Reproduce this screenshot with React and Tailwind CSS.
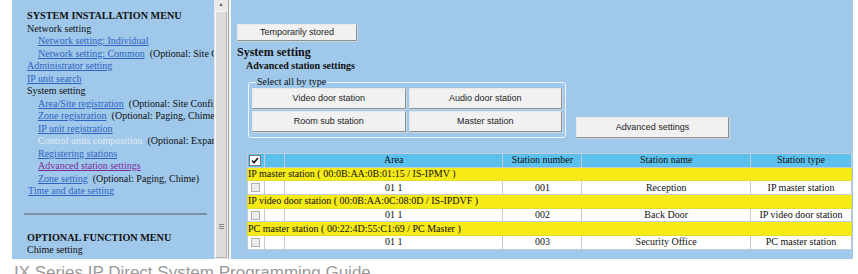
const serif = "font-['Liberation_Serif','Times_New_Roman',serif]";
const sans = "font-['Liberation_Sans',Arial,sans-serif]";

function MenuLink({ children, className = '' }) {
  return <span className={`text-[#2f63c4] underline decoration-[#2f63c4] ${className}`}>{children}</span>;
}

function WinButton({ children, className = '' }) {
  return (
    <div
      className={`flex items-center justify-center bg-[#f1f1f1] border border-t-[#e8e8e8] border-l-[#e8e8e8] border-r-[#8f8f8f] border-b-[#8f8f8f] shadow-[1px_1px_0_#c9d6e3] text-[9px] text-[#222] ${sans} ${className}`}
    >
      {children}
    </div>
  );
}

const groups = [
  { label: 'IP master station ( 00:0B:AA:0B:01:15 / IS-IPMV )', area: '01 1', num: '001', name: 'Reception', type: 'IP master station' },
  { label: 'IP video door station ( 00:0B:AA:0C:08:0D / IS-IPDVF )', area: '01 1', num: '002', name: 'Back Door', type: 'IP video door station' },
  { label: 'PC master station ( 00:22:4D:55:C1:69 / PC Master )', area: '01 1', num: '003', name: 'Security Office', type: 'PC master station' },
];

function SidePanel() {
  return (
    <div className={`w-[202px] h-full bg-[#9fc8ea] overflow-hidden whitespace-nowrap pt-[10px] pl-[15px] text-[10px] leading-[12.5px] text-[#111] ${serif}`}>
      <div className="font-bold text-[10.2px]">SYSTEM INSTALLATION MENU</div>
      <div>Network setting</div>
      <div className="pl-[11px]"><MenuLink>Network setting: Individual</MenuLink></div>
      <div className="pl-[11px]"><MenuLink>Network setting: Common</MenuLink>&nbsp; (Optional: Site Configuration)</div>
      <div><MenuLink>Administrator setting</MenuLink></div>
      <div><MenuLink>IP unit search</MenuLink></div>
      <div>System setting</div>
      <div className="pl-[11px]"><MenuLink>Area/Site registration</MenuLink>&nbsp; (Optional: Site Configuration)</div>
      <div className="pl-[11px]"><MenuLink>Zone registration</MenuLink>&nbsp; (Optional: Paging, Chime)</div>
      <div className="pl-[11px]"><MenuLink>IP unit registration</MenuLink></div>
      <div className="pl-[11px]"><span className="text-[#e4ecf4]">Control units composition</span>&nbsp; (Optional: Expand)</div>
      <div className="pl-[11px]"><MenuLink>Registering stations</MenuLink></div>
      <div className="pl-[11px]"><MenuLink className="!text-[#7b2d9c] !decoration-[#7b2d9c]">Advanced station settings</MenuLink></div>
      <div className="pl-[11px]"><MenuLink>Zone setting</MenuLink>&nbsp; (Optional: Paging, Chime)</div>
      <div className="pl-[1px]"><MenuLink>Time and date setting</MenuLink></div>
      <div className="mt-[15px] mr-[7px] -ml-[3px] h-[2px] bg-[#7d8fa0]" />
      <div className="mt-[17px] font-bold text-[10.2px]">OPTIONAL FUNCTION MENU</div>
      <div>Chime setting</div>
      <div className="pl-[11px] text-[#e4ecf4]">Chime schedule</div>
    </div>
  );
}

function Scrollbar() {
  return (
    <div className="w-[15px] h-full flex flex-col bg-[#e9e9e9] border-r border-[#a9a9a9] px-[1px]">
      <div className="h-[11px] flex items-start justify-center text-[5px] leading-[8px] text-[#555]">▲</div>
      <div className="flex-1 mb-[1px] bg-[#dcdcdc] border border-[#f7f7f7] border-r-[#b5b5b5] border-b-[#b5b5b5] flex flex-col items-center justify-end pb-[28px]">
        <div className="flex flex-col gap-[1px]">
          <div className="w-[5px] h-[1px] bg-[#8a8a8a]" />
          <div className="w-[5px] h-[1px] bg-[#8a8a8a]" />
          <div className="w-[5px] h-[1px] bg-[#8a8a8a]" />
        </div>
      </div>
    </div>
  );
}

function StationTable() {
  const cell = 'border border-[#c3ccd6] h-[13.7px] p-0 leading-[12px]';
  return (
    <table className={`ml-[16px] w-[605px] border-collapse text-[10px] text-[#111] ${serif}`}>
      <colgroup>
        <col className="w-[17px]" />
        <col className="w-[20px]" />
        <col className="w-[219px]" />
        <col className="w-[79px]" />
        <col className="w-[169px]" />
        <col className="w-[101px]" />
      </colgroup>
      <tbody>
        <tr className="bg-[#5cc0ec]">
          <td className={`${cell} border-[#a9d6ee]`}>
            <div className="ml-[1px] w-[12px] h-[11px] bg-white border border-[#7a7a7a] flex items-center justify-center">
              <svg width="8" height="7" viewBox="0 0 8 7">
                <path d="M1 3.5 L3 5.5 L7 1" fill="none" stroke="#111" strokeWidth="1.6" />
              </svg>
            </div>
          </td>
          <td className={`${cell} border-[#a9d6ee]`} />
          <td className={`${cell} border-[#a9d6ee] text-center`}>Area</td>
          <td className={`${cell} border-[#a9d6ee] text-center`}>Station number</td>
          <td className={`${cell} border-[#a9d6ee] text-center`}>Station name</td>
          <td className={`${cell} border-[#a9d6ee] text-center`}>Station type</td>
        </tr>
        {groups.map((g) => (
          <Group key={g.num} g={g} cell={cell} />
        ))}
      </tbody>
    </table>
  );
}

function Group({ g, cell }) {
  return (
    <>
      <tr className="bg-[#f6ea17]">
        <td colSpan={6} className={`${cell} border-[#e6dc2a] whitespace-nowrap`}>{g.label}</td>
      </tr>
      <tr className="bg-white">
        <td className={cell}>
          <div className="ml-[3px] w-[9px] h-[9px] border border-[#b0b0b0] bg-[#ececec]" />
        </td>
        <td className={cell} />
        <td className={`${cell} text-center`}>{g.area}</td>
        <td className={`${cell} text-center`}>{g.num}</td>
        <td className={`${cell} text-center`}>{g.name}</td>
        <td className={`${cell} text-center whitespace-nowrap`}>{g.type}</td>
      </tr>
    </>
  );
}

function MainPanel() {
  return (
    <div className={`w-[622px] h-full bg-[#9fc8ea] overflow-hidden pt-[24px] ${serif}`}>
      <WinButton className="ml-[6px] w-[120px] h-[17px]">Temporarily stored</WinButton>
      <div className="ml-[6px] mt-[4px] font-bold text-[12px] leading-[14px] text-[#111]">System setting</div>
      <div className="ml-[15px] font-bold text-[10px] leading-[13px] text-[#111]">Advanced station settings</div>
      <div className="flex items-end mt-[5px]">
        <fieldset className="ml-[17px] w-[318px] h-[61px] border border-[#eef4fa] rounded-[3px] px-[3px] pt-0 pb-[3px] m-0">
          <legend className="ml-[4px] px-[1px] text-[10px] leading-[10px] text-[#111]">Select all by type</legend>
          <div className="grid grid-cols-2 gap-x-[3px] gap-y-[2px] mt-[1px]">
            <WinButton className="h-[21px]">Video door station</WinButton>
            <WinButton className="h-[21px]">Audio door station</WinButton>
            <WinButton className="h-[21px]">Room sub station</WinButton>
            <WinButton className="h-[21px]">Master station</WinButton>
          </div>
        </fieldset>
        <WinButton className="ml-[10px] w-[153px] h-[21px]">Advanced settings</WinButton>
      </div>
      <div className="mt-[15px]">
        <StationTable />
      </div>
    </div>
  );
}

export default function App() {
  return (
    <div className="w-[858px] h-[274px] overflow-hidden bg-white">
      <div className="flex h-[259px]">
        <div className="w-[12px]" />
        <SidePanel />
        <Scrollbar />
        <div className="w-[2px] bg-[#f4f4f4]" />
        <MainPanel />
      </div>
      <div className={`pl-[14px] pt-[4px] text-[17px] leading-[20px] text-[#999] whitespace-nowrap ${sans}`}>
        IX Series IP Direct System Programming Guide
      </div>
    </div>
  );
}
